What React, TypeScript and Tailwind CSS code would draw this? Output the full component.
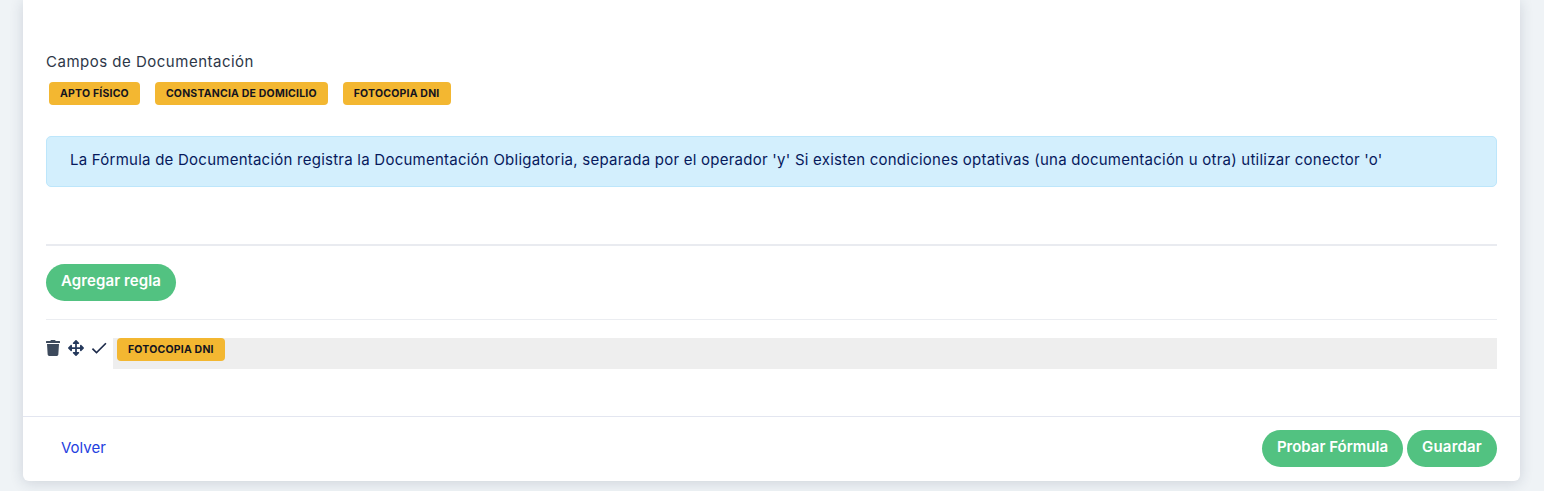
import React from "react";
import { FaTrash, FaArrowsAlt } from "react-icons/fa";
import { MdCheck } from "react-icons/md";

const font = { fontFamily: "Inter, 'Liberation Sans', sans-serif" };

function Tag({ label }: { label: string }) {
  return (
    <span className="flex h-[23px] items-center rounded-[4px] bg-[#f3b731] px-[11px] text-[10.5px] font-bold tracking-[0.2px] text-[#14141f]">
      {label}
    </span>
  );
}

function Pill({ label, tracking }: { label: string; tracking: string }) {
  return (
    <button className={`flex h-[37px] items-center rounded-full bg-[#52c281] px-[15px] pb-[2px] text-[15px] font-semibold text-white ${tracking}`}>
      {label}
    </button>
  );
}

export default function App() {
  return (
    <div className="h-[491px] w-[1544px] overflow-hidden bg-[#eff3f6] pl-[23px]" style={font}>
      <div className="flex h-[481px] w-[1497px] flex-col rounded-b-[6px] bg-white shadow-[0_2px_14px_rgba(40,50,80,0.16)]">
        <div className="flex-1 px-[23px] pt-[51px]">
          <div className="h-[20px] pt-[1px] text-[15px] leading-[20px] tracking-[0.5px] text-[#2d3748]">Campos de Documentación</div>
          <div className="mt-[11px] flex gap-[15px] pl-[3px]">
            <Tag label="APTO FÍSICO" />
            <Tag label="CONSTANCIA DE DOMICILIO" />
            <Tag label="FOTOCOPIA DNI" />
          </div>
          <div className="mt-[31px] flex h-[51px] items-center rounded-[5px] border border-[#bde6fb] bg-[#d3effd] pb-[3px] pl-[23px] text-[15px] tracking-[0.24px] text-[#06195c]">
            La Fórmula de Documentación registra la Documentación Obligatoria, separada por el operador 'y' Si existen condiciones optativas (una documentación u otra) utilizar conector 'o'
          </div>
          <div className="mt-[57px] border-t-2 border-[#e9ebf0]" />
          <div className="mt-[18px] flex">
            <Pill label="Agregar regla" tracking="tracking-[0.1px]" />
          </div>
          <div className="mt-[18px] border-t border-[#ebedf1]" />
          <div className="mt-[18px] flex">
            <div className="flex h-[20px] w-[67px] items-center">
              <FaTrash className="h-[16px] w-[14px] text-[#3d4a5c]" />
              <FaArrowsAlt className="ml-[8px] h-[16px] w-[16px] text-[#25395c]" />
              <MdCheck className="ml-[5px] h-[20px] w-[20px] shrink-0 text-[#1c2a4a]" />
            </div>
            <div className="flex h-[31px] flex-1 items-start bg-[#eeeeee] pl-[4px]">
              <Tag label="FOTOCOPIA DNI" />
            </div>
          </div>
        </div>
        <div className="flex h-[65px] items-center justify-between border-t border-[#e3e6f0] px-[23px] pb-[2px]">
          <a className="pt-[1px] pl-[15px] text-[15px] text-[#2440e0]">Volver</a>
          <div className="flex gap-[4px]">
            <Pill label="Probar Fórmula" tracking="tracking-[0px]" />
            <Pill label="Guardar" tracking="tracking-[0.2px]" />
          </div>
        </div>
      </div>
    </div>
  );
}
